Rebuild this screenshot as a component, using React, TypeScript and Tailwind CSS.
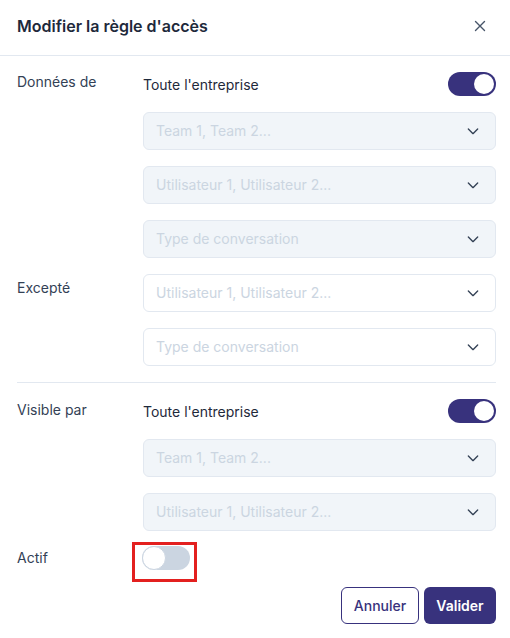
import React from "react";

const Chevron = () => (
  <svg width="16" height="16" viewBox="0 0 24 24" fill="none" stroke="#334155" strokeWidth="2" strokeLinecap="round" strokeLinejoin="round">
    <path d="M5 9l7 7 7-7" />
  </svg>
);

const Select = ({ text, disabled }: { text: string; disabled?: boolean }) => (
  <div
    className={`h-[38px] rounded-md border border-[#e2e8f0] flex items-center justify-between pl-[12px] pr-[14px] ${
      disabled ? "bg-[#f1f5f9]" : "bg-white"
    }`}
  >
    <span className="text-[14px] text-[#cbd5e1] -mt-[1px]">{text}</span>
    <Chevron />
  </div>
);

const ToggleOn = () => (
  <div className="w-[48px] h-[24px] rounded-full bg-[#38327d] flex items-center justify-end pr-[2px]">
    <div className="w-[20px] h-[20px] rounded-full bg-white" />
  </div>
);

const ToggleOff = () => (
  <div className="w-[48px] h-[24px] rounded-full bg-[#cbd5e1] flex items-center">
    <div className="w-[24px] h-[24px] rounded-full bg-white border border-[#cbd5e1]" />
  </div>
);

export default function App() {
  return (
    <div className="w-[510px] h-[638px] bg-white text-[#334155]" style={{ fontFamily: "Inter, 'Noto Sans', sans-serif" }}>
      <div className="h-[56px] flex items-center justify-between pl-[17px] pr-[24px] border-b border-[#e2e8f0]">
        <span className="text-[16px] font-semibold text-[#1e293b] -mt-[3px]">Modifier la règle d'accès</span>
        <svg width="12" height="12" viewBox="0 0 12 12" stroke="#475569" strokeWidth="1.4" strokeLinecap="round" className="-mt-[3px]">
          <path d="M1.5 1.5l9 9M10.5 1.5l-9 9" />
        </svg>
      </div>
      <div className="pt-[16px] pl-[17px] pr-[14px]">
        <div className="grid grid-cols-[126px_1fr]">
          <div className="text-[14px] leading-[20px] text-[#334155]">Données de</div>
          <div className="flex flex-col gap-[16px]">
            <div className="flex items-center justify-between">
              <span className="text-[14px] text-[#1e293b] mt-[1px]">Toute l'entreprise</span>
              <ToggleOn />
            </div>
            <Select text="Team 1, Team 2..." disabled />
            <Select text="Utilisateur 1, Utilisateur 2..." disabled />
            <Select text="Type de conversation" disabled />
          </div>
        </div>
        <div className="grid grid-cols-[126px_1fr] mt-[16px]">
          <div className="text-[14px] leading-[20px] pt-[4px] text-[#334155]">Excepté</div>
          <div className="flex flex-col gap-[16px]">
            <Select text="Utilisateur 1, Utilisateur 2..." />
            <Select text="Type de conversation" />
          </div>
        </div>
        <div className="h-px bg-[#e2e8f0] mt-[16px] mb-[16px]" />
        <div className="grid grid-cols-[126px_1fr]">
          <div className="text-[14px] leading-[20px] pt-[1px] text-[#334155]">Visible par</div>
          <div className="flex flex-col gap-[16px]">
            <div className="flex items-center justify-between">
              <span className="text-[14px] text-[#1e293b] mt-[1px]">Toute l'entreprise</span>
              <ToggleOn />
            </div>
            <Select text="Team 1, Team 2..." disabled />
            <Select text="Utilisateur 1, Utilisateur 2..." disabled />
          </div>
        </div>
        <div className="grid grid-cols-[125px_1fr] mt-[15px] items-center">
          <div className="text-[14px] leading-[20px] text-[#334155]">Actif</div>
          <div className="relative w-[48px]">
            <ToggleOff />
            <div className="absolute left-[-10px] top-[-4px] w-[65px] h-[40px] border-[3px] border-[#e3201f]" />
          </div>
        </div>
        <div className="flex justify-end gap-[5px] mt-[17px]">
          <button className="h-[37px] w-[78px] rounded-md border border-[#38327d] text-[#38327d] text-[14px] font-medium bg-white">
            Annuler
          </button>
          <button className="h-[37px] w-[72px] rounded-md bg-[#38327d] text-white text-[14px] font-semibold">
            Valider
          </button>
        </div>
      </div>
    </div>
  );
}
